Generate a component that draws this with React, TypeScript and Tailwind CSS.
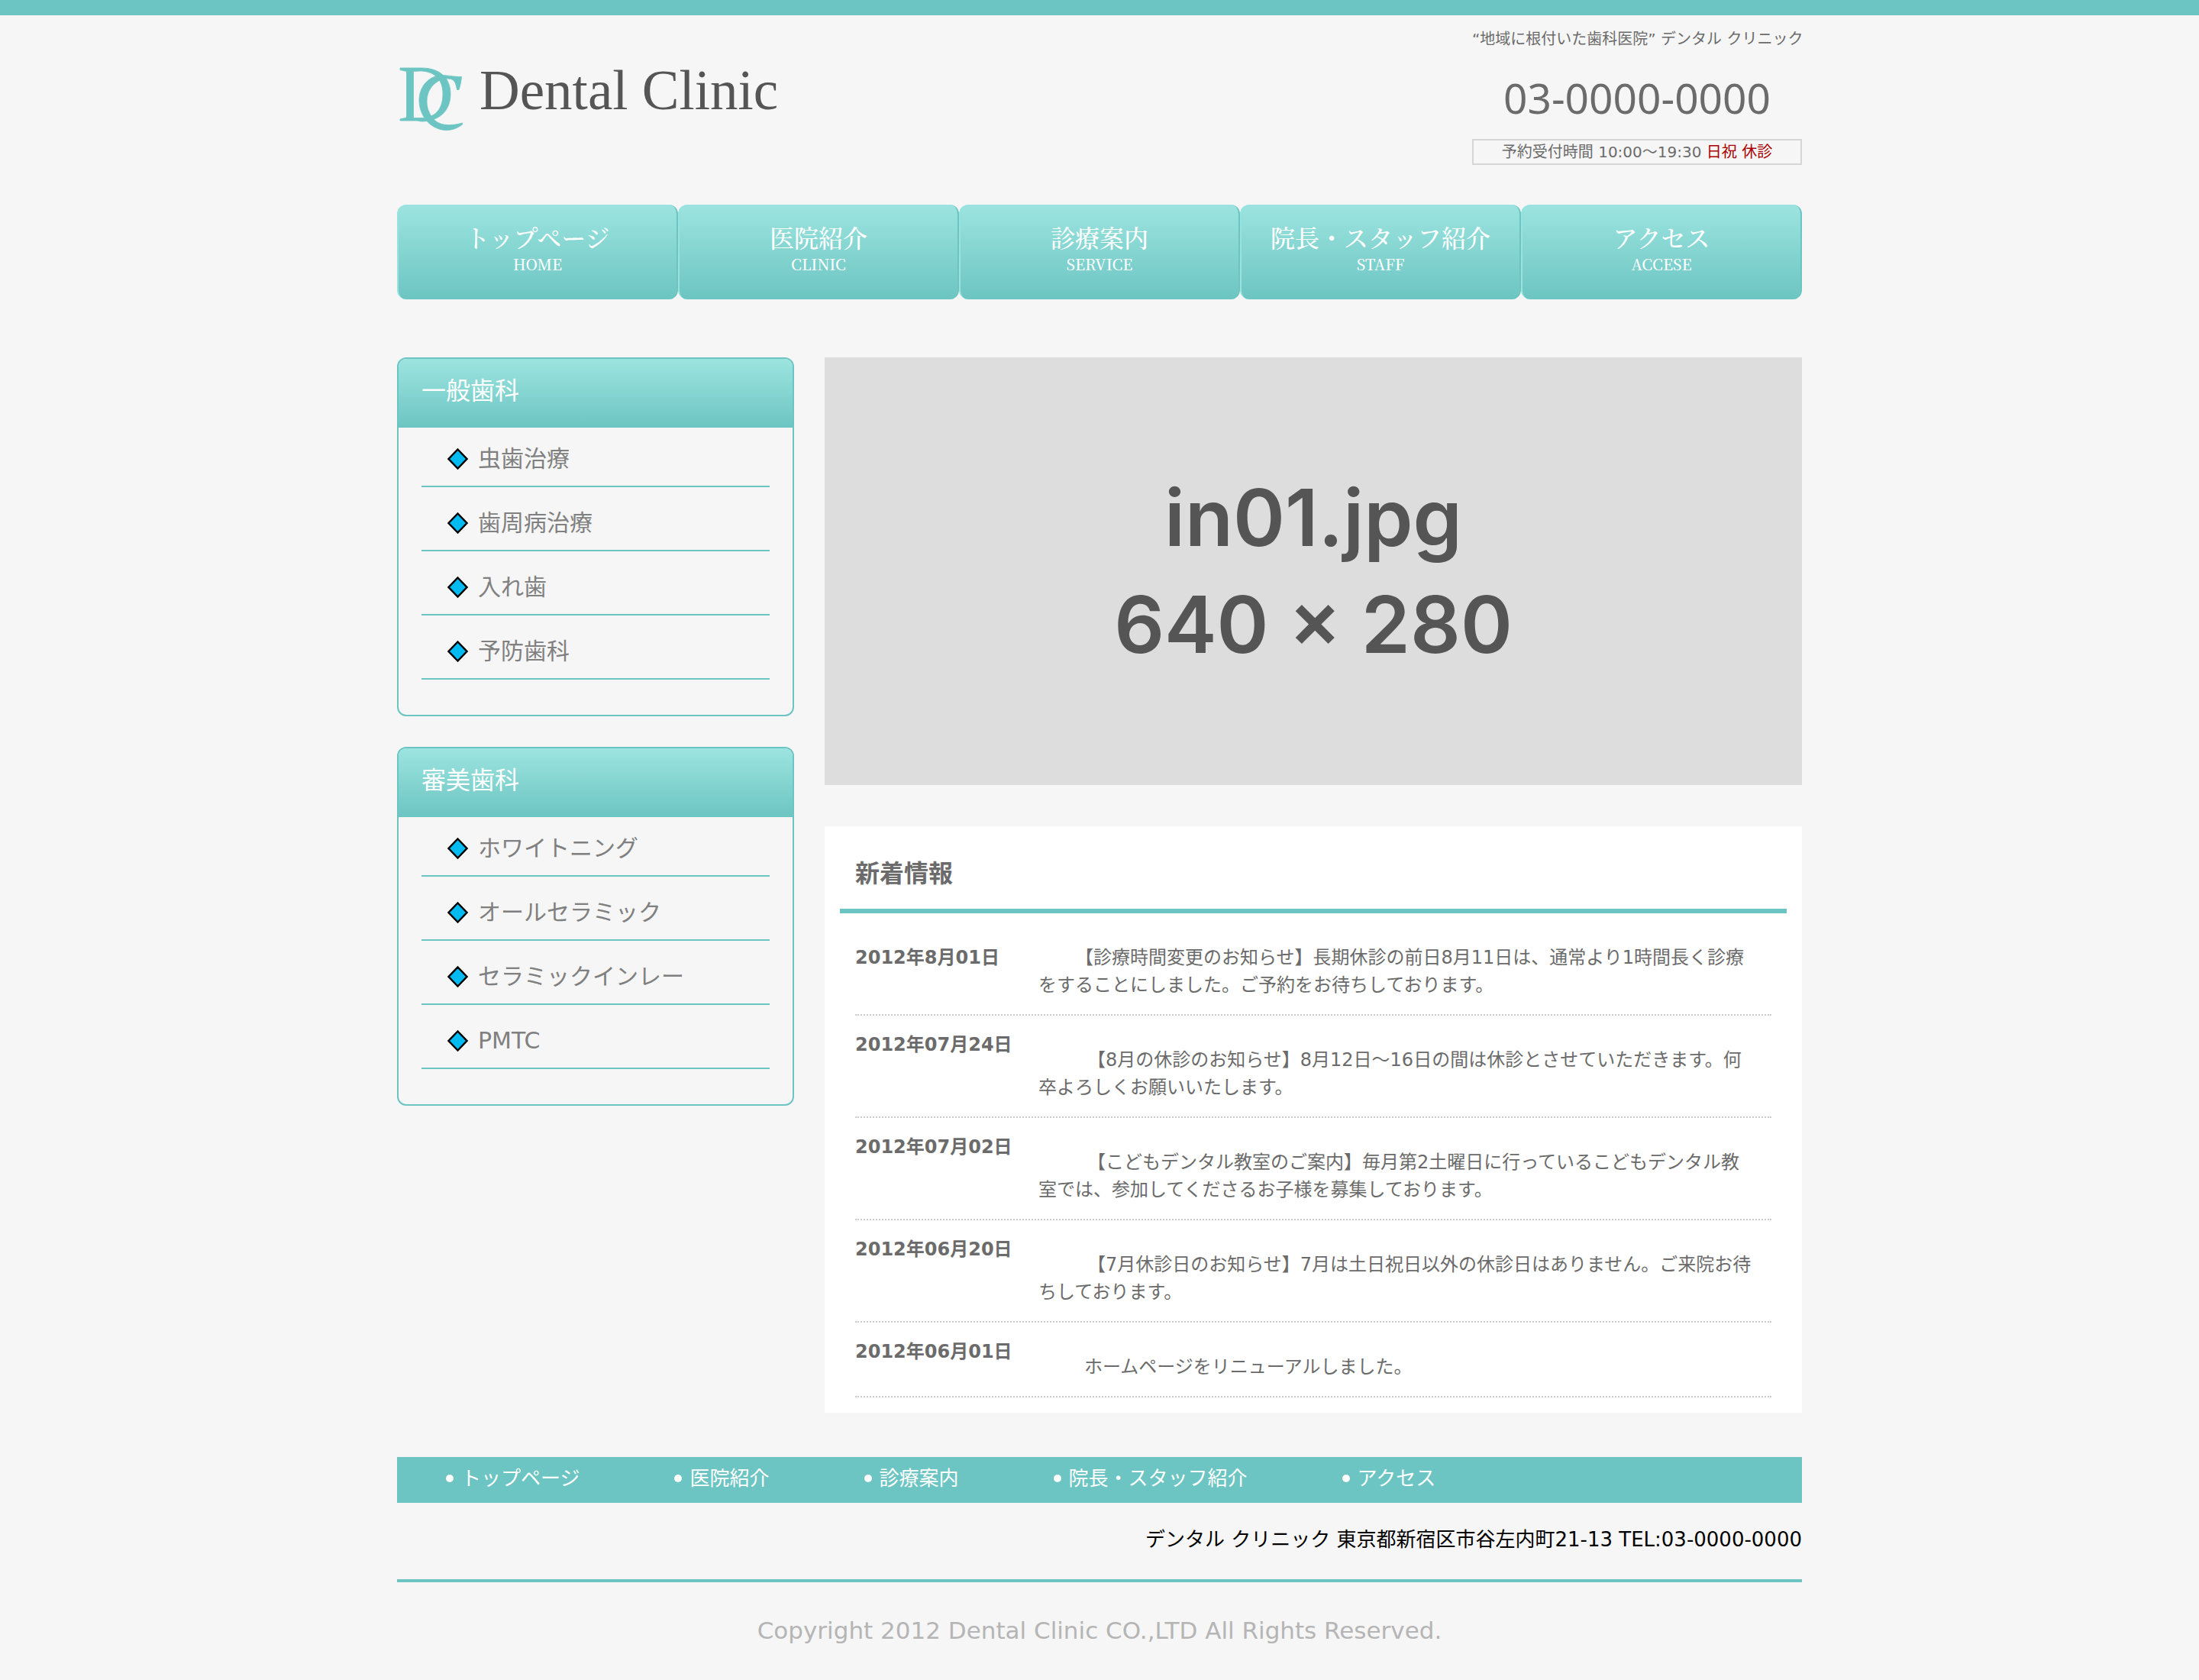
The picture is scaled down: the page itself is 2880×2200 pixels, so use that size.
const navItems = [
  { label: "トップページ", sub: "HOME" },
  { label: "医院紹介", sub: "CLINIC" },
  { label: "診療案内", sub: "SERVICE" },
  { label: "院長・スタッフ紹介", sub: "STAFF" },
  { label: "アクセス", sub: "ACCESE" },
];

const sideMenus = [
  { title: "一般歯科", items: ["虫歯治療", "歯周病治療", "入れ歯", "予防歯科"] },
  { title: "審美歯科", items: ["ホワイトニング", "オールセラミック", "セラミックインレー", "PMTC"] },
];

const news = [
  {
    date: "2012年8月01日",
    text: "【診療時間変更のお知らせ】長期休診の前日8月11日は、通常より1時間長く診療をすることにしました。ご予約をお待ちしております。",
    style: "indent-[48px]",
  },
  {
    date: "2012年07月24日",
    text: "【8月の休診のお知らせ】8月12日～16日の間は休診とさせていただきます。何卒よろしくお願いいたします。",
    style: "indent-[64px] mt-5",
  },
  {
    date: "2012年07月02日",
    text: "【こどもデンタル教室のご案内】毎月第2土曜日に行っているこどもデンタル教室では、参加してくださるお子様を募集しております。",
    style: "indent-[64px] mt-5",
  },
  {
    date: "2012年06月20日",
    text: "【7月休診日のお知らせ】7月は土日祝日以外の休診日はありません。ご来院お待ちしております。",
    style: "indent-[64px] mt-5",
  },
  {
    date: "2012年06月01日",
    text: "ホームページをリニューアルしました。",
    style: "indent-[60px] mt-5",
  },
];

function LogoMark() {
  return (
    <svg width="88" height="92" viewBox="0 0 88 92" aria-hidden="true" className="shrink-0">
      <g fill="#6cc5c2" stroke="#6cc5c2" strokeWidth="0.8">
        <path
          fillRule="evenodd"
          d="M4 9H32C55 9 70 21 70 43C70 66 54 79 32 79L26 78H4V76L12.500 74V13.500L4 11.500ZM21.500 13.500V74.500H30C48 75 60 65 60 43C60 22 47 13 30 13Z"
        />
        <path d="M84.500 20.500C84 26 83 32 81 37.500H78.500C77.500 31 76 26 72 24C66 22 60 23 56 25C45 31 39 40 39 53C39 61 42 69 47 75C54 84 68 86 85.500 81V83C79 88 72 90.500 65 90.500C52 90.500 41 83 35 73C31 66 29 59 29 52C29 34 40 21 56 18.500C63 18 73 20.500 84.500 20.500Z" />
      </g>
    </svg>
  );
}

function Diamond() {
  return (
    <svg width="28" height="30" viewBox="0 0 28 30" aria-hidden="true" className="shrink-0">
      <path d="M13.500 2.500 25.500 15 13.500 27.500 1.500 15Z" fill="#00baf2" stroke="#000" strokeWidth="2.500" />
    </svg>
  );
}

function Header() {
  return (
    <header className="flex h-[248px] items-start justify-between">
      <a href="#" className="flex items-start pt-[60px]">
        <LogoMark />
        <span className="ml-5 -mt-px font-['Liberation_Serif',serif] text-[73px] leading-[80px] text-[#555]">
          Dental Clinic
        </span>
      </a>
      <div className="w-[432px] pt-4 text-center text-[20px] leading-[30px] text-[#6b6b6b]">
        <p className="whitespace-nowrap">“地域に根付いた歯科医院” デンタル クリニック</p>
        <p className="mt-6 font-['Noto_Sans',sans-serif] text-[55px] leading-[76px]">03-0000-0000</p>
        <p className="mt-4 whitespace-nowrap border-2 border-[#d5d5d5]">
          予約受付時間 10:00～19:30 <span className="text-[#a00]">日祝 休診</span>
        </p>
      </div>
    </header>
  );
}

function MainNav() {
  return (
    <nav>
      <ul className="grid grid-cols-5">
        {navItems.map((item) => (
          <li key={item.sub}>
            <a
              href="#"
              className="flex h-[124px] flex-col items-center rounded-[12px] border-l-2 border-r-2 border-l-[#9be2df] border-r-[#6cc5c2] bg-linear-to-b from-[#9ce4e0] to-[#6cc5c2] pt-[18px] font-['Noto_Serif_CJK_JP','Noto_Sans_CJK_JP',serif] font-medium text-white"
            >
              <span className="text-[32px] leading-[48px]">{item.label}</span>
              <span className="text-[20px] leading-[24px]">{item.sub}</span>
            </a>
          </li>
        ))}
      </ul>
    </nav>
  );
}

function SideMenu({ title, items }: { title: string; items: string[] }) {
  return (
    <section className="overflow-hidden rounded-[12px] border-2 border-[#6cc5c2] pb-[46px]">
      <h2 className="h-[90px] bg-linear-to-b from-[#9ce4e0] to-[#6cc5c2] px-[30px] pt-[18px] text-[32px] leading-[48px] text-white">
        {title}
      </h2>
      <ul className="mx-[30px] -mt-[6px]">
        {items.map((item) => (
          <li key={item} className="h-[84px] border-b-2 border-[#6cc5c2] pl-[34px] pt-6">
            <a href="#" className="flex items-center gap-3 text-[30px] leading-[46px] text-[#808080]">
              <Diamond />
              {item}
            </a>
          </li>
        ))}
      </ul>
    </section>
  );
}

function News() {
  return (
    <section className="mt-[54px] bg-white px-5 pb-5 pt-[38px] text-[#6b6b6b]">
      <h2 className="border-b-[6px] border-[#6cc5c2] px-5 pb-[22px] text-[32px] font-bold leading-[48px]">新着情報</h2>
      <dl className="mx-5 mt-5 text-[24px] leading-[36px]">
        {news.map((entry) => (
          <div key={entry.date} className="flex border-b-2 border-dotted border-[#ccc] py-5">
            <dt className="w-[240px] shrink-0 font-bold">{entry.date}</dt>
            <dd className={`mr-5 flex-1 ${entry.style}`}>{entry.text}</dd>
          </div>
        ))}
      </dl>
    </section>
  );
}

function Footer() {
  return (
    <footer className="mt-[58px]">
      <ul className="flex h-[60px] gap-x-[124px] bg-[#6cc5c2] pl-16 text-[26px] leading-[56px] text-white">
        {navItems.map((item) => (
          <li key={item.sub} className="flex items-center gap-[10px] pb-1">
            <span className="size-[10px] rounded-full bg-white" />
            <a href="#">{item.label}</a>
          </li>
        ))}
      </ul>
      <address className="border-b-4 border-[#6cc5c2] pb-8 pt-7 text-right text-[26px] not-italic leading-[40px] text-black">
        デンタル クリニック 東京都新宿区市谷左内町21-13 TEL:03-0000-0000
      </address>
      <p className="py-10 text-center text-[31px] leading-[46px] text-[#b5b5b5]">
        Copyright 2012 Dental Clinic CO.,LTD All Rights Reserved.
      </p>
    </footer>
  );
}

export default function App() {
  return (
    <div lang="ja" className="min-h-screen border-t-[20px] border-[#6cc5c2] bg-[#f6f6f6] font-['DejaVu_Sans','Noto_Sans_CJK_JP',sans-serif]">
      <div className="mx-auto w-full max-w-[1840px]">
        <Header />
        <MainNav />
        <div className="mt-[76px] flex items-start gap-10">
          <aside className="flex w-[520px] shrink-0 flex-col gap-10">
            {sideMenus.map((menu) => (
              <SideMenu key={menu.title} {...menu} />
            ))}
          </aside>
          <main className="min-w-0 flex-1">
            <div className="flex aspect-[16/7] flex-col items-center justify-center bg-[#ddd] font-['Inter',sans-serif] text-[103px] font-semibold leading-[140px] text-[#555]">
              <span>in01.jpg</span>
              <span>640 × 280</span>
            </div>
            <News />
          </main>
        </div>
        <Footer />
      </div>
    </div>
  );
}
